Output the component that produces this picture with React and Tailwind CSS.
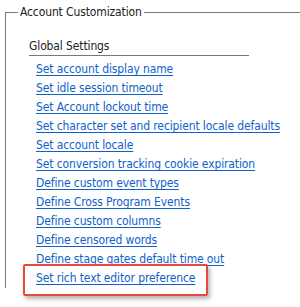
import React from 'react'

const links = [
    'Set account display name',
    'Set idle session timeout',
    'Set Account lockout time',
    'Set character set and recipient locale defaults',
    'Set account locale',
    'Set conversion tracking cookie expiration',
    'Define custom event types',
    'Define Cross Program Events',
    'Define custom columns',
    'Define censored words',
    'Define stage gates default time out',
    'Set rich text editor preference',
]

function App() {
    return (
        <div className="w-[300px] h-[307px] bg-white overflow-hidden font-['DejaVu_Sans_Condensed','DejaVu_Sans',sans-serif] text-[12px] tracking-[-0.12px]">
            <fieldset className="ml-[5px] mt-[4px] w-[320px] border-l border-t border-[#7a7a7a] pl-[23px]">
                <legend className="ml-[-11px] px-[2px] leading-4 text-[#222]">Account Customization</legend>
                <div className="mt-[17px] w-[220px] leading-[18px] border-b border-[#777] text-[#222]">
                    Global Settings
                </div>
                <ul className="mt-[4px] pl-[7px]">
                    {links.map((label, i) => (
                        <li key={label} className="relative h-[19px] leading-[19px]">
                            <a href="#" className="text-[#0f62c9] underline underline-offset-2">
                                {label}
                            </a>
                            {i === links.length - 1 && (
                                <span className="absolute left-[-13px] top-[-5px] w-[185px] h-[32px] border-2 border-[#ea4640] rounded-[2px] shadow-[2px_3px_4px_rgba(0,0,0,0.3)]" />
                            )}
                        </li>
                    ))}
                </ul>
            </fieldset>
        </div>
    )
}

export default App
